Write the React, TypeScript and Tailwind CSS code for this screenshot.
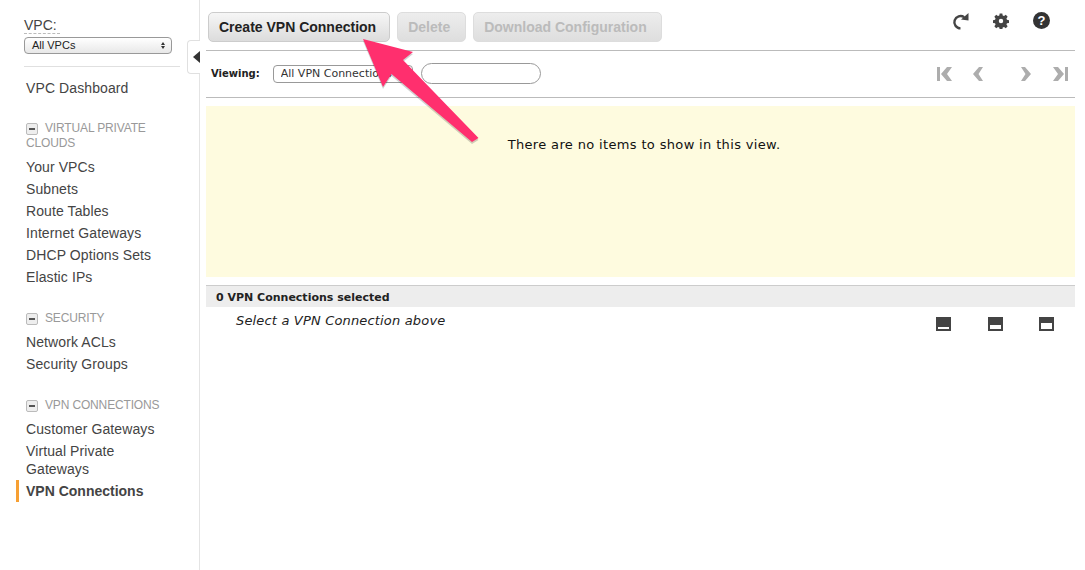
const sans = 'font-["Liberation_Sans",Arial,sans-serif]';
const verdana = 'font-["DejaVu_Sans",Verdana,sans-serif]';

function NavLink({ label, active }: { label: string; active?: boolean }) {
  return (
    <div
      className={
        active
          ? 'border-l-[3px] border-[#f7a033] -ml-[10px] pl-[7px] text-[14px] leading-[22px] font-bold text-[#444]'
          : 'text-[14px] leading-[22px] tracking-[0.1px] text-[#444]'
      }
    >
      {label}
    </div>
  );
}

function SectionHead({ label }: { label: string }) {
  return (
    <div className="mt-[22px] mb-[5px] pt-px text-[12px] leading-[15px] tracking-[-0.15px] text-[#999]">
      <span className="inline-flex items-center justify-center align-middle -my-[3px] w-[12px] h-[12px] mr-[7px] rounded-[2px] border border-[#bbb] bg-[#eee]">
        <span className="block w-[6px] h-[2px] bg-[#555]" />
      </span>
      {label}
    </div>
  );
}

function PagerIcon({ d, className }: { d: string; className?: string }) {
  return (
    <svg width="16" height="16" viewBox="0 0 16 16" className={className}>
      <path d={d} fill="#adadad" />
    </svg>
  );
}

function PaneIcon({ bar }: { bar: string }) {
  return (
    <div className="w-[15px] h-[14px] bg-[#444] flex items-end justify-center pb-[2px]">
      <div className={bar} />
    </div>
  );
}

export default function App() {
  return (
    <div className={`relative h-[570px] w-[1085px] flex bg-white overflow-hidden ${sans}`}>
      {/* Sidebar */}
      <div className="w-[200px] shrink-0 border-r border-[#e4e4e4] pt-[17px] pl-[26px] pr-[20px]">
        <div className="-ml-[2px]">
          <div className="text-[14px] leading-[17px] text-[#444] w-[36px] border-b border-dashed border-[#bbb] h-[17px]">VPC:</div>
          <div className="mt-[3px] w-[148px] h-[17px] rounded-[4px] border border-[#999] bg-gradient-to-b from-white to-[#e8e8e8] flex items-center justify-between pl-[7px] pr-[6px] text-[11px] text-[#222]">
            All VPCs
            <span className="flex flex-col gap-[1px]">
              <span className="block w-0 h-0 border-x-[2.5px] border-x-transparent border-b-[3px] border-b-[#333]" />
              <span className="block w-0 h-0 border-x-[2.5px] border-x-transparent border-t-[3px] border-t-[#333]" />
            </span>
          </div>
          <div className="mt-[12px] h-px bg-[#e0e0e0] w-[156px]" />
        </div>
        <div className="mt-[10px] -mb-px"><NavLink label="VPC Dashboard" /></div>

        <SectionHead label="VIRTUAL PRIVATE CLOUDS" />
        <NavLink label="Your VPCs" />
        <NavLink label="Subnets" />
        <NavLink label="Route Tables" />
        <NavLink label="Internet Gateways" />
        <NavLink label="DHCP Options Sets" />
        <NavLink label="Elastic IPs" />

        <SectionHead label="SECURITY" />
        <NavLink label="Network ACLs" />
        <NavLink label="Security Groups" />

        <SectionHead label="VPN CONNECTIONS" />
        <NavLink label="Customer Gateways" />
        <div className="text-[14px] leading-[18px] tracking-[0.1px] text-[#444] py-[2px]">Virtual Private Gateways</div>
        <NavLink label="VPN Connections" active />
      </div>

      {/* Main */}
      <div className="flex-1 flex flex-col pl-[6px] pr-[10px]">
        <div className="h-[51px] shrink-0 border-b border-[#bbb] flex items-start pt-[12px] pl-[2px]">
          <button className="h-[30px] pl-[10px] pr-[13px] rounded-[5px] border border-[#ccc] bg-gradient-to-b from-[#f6f6f6] to-[#dcdcdc] text-[14px] font-bold text-[#222] whitespace-nowrap">
            Create VPN Connection
          </button>
          <button className="ml-[7px] h-[30px] pl-[10px] pr-[15px] rounded-[5px] border border-[#ddd] bg-gradient-to-b from-[#ededed] to-[#dedede] text-[14px] font-bold text-[#bbb]">
            Delete
          </button>
          <button className="ml-[7px] h-[30px] pl-[10px] pr-[14px] rounded-[5px] border border-[#ddd] bg-gradient-to-b from-[#ededed] to-[#dedede] text-[14px] font-bold text-[#bbb] whitespace-nowrap">
            Download Configuration
          </button>
          <div className="ml-auto h-[17px] flex items-center pr-[25px]">
            <svg width="18" height="18" viewBox="0 0 18 18">
              <path d="M13.2 5.2 A6.2 6.2 0 1 0 9.5 16.4" fill="none" stroke="#444" strokeWidth="2.4" />
              <path d="M17.5 1 L17.5 8.5 L10 7.5 Z" fill="#444" />
            </svg>
            <svg width="16" height="16" viewBox="0 0 18 18" className="ml-[24px]">
              <path
                fill="#444"
                fillRule="evenodd"
                d="M7.5 0.5h3l.4 2.4 1.5.6 2-1.4 2.1 2.1-1.4 2 .6 1.5 2.4.4v3l-2.4.4-.6 1.5 1.4 2-2.1 2.1-2-1.4-1.5.6-.4 2.4h-3l-.4-2.4-1.5-.6-2 1.4-2.1-2.1 1.4-2-.6-1.5-2.4-.4v-3l2.4-.4.6-1.5-1.4-2 2.1-2.1 2 1.4 1.5-.6zM9 6.5a2.5 2.5 0 1 0 0 5 2.5 2.5 0 0 0 0-5z"
              />
            </svg>
            <div className="ml-[24px] w-[17px] h-[17px] rounded-full bg-[#333] text-white text-[13px] font-bold leading-[17px] text-center">?</div>
          </div>
        </div>

        <div className="h-[47px] shrink-0 border-b border-[#bbb] flex items-center pl-[5px] pb-[1px]">
          <span className={`text-[10px] font-bold text-[#222] ${verdana}`}>Viewing:</span>
          <div className={`ml-[13px] w-[140px] h-[18px] rounded-[4px] border border-[#999] bg-white text-[11px] leading-[16px] pl-[7px] pr-[20px] text-[#333] whitespace-nowrap ${verdana}`}>
            <div className="overflow-hidden">All VPN Connections</div>
          </div>
          <div className="ml-[8px] w-[120px] h-[21px] rounded-full border border-[#999] bg-white" />
          <div className="ml-auto flex items-center pr-[7px]">
            <PagerIcon d="M0 1h3v14H0zM4 8l6-7h5L10 8l5 7h-5z" />
            <PagerIcon className="ml-[17px]" d="M3 8l6-7h4L8.5 8l4.5 7H9z" />
            <PagerIcon className="ml-[32px]" d="M13 8L7 1H3l4.5 7L3 15h4z" />
            <PagerIcon className="ml-[18px]" d="M16 1h-3v14h3zM12 8L6 1H1l5 7-5 7h5z" />
          </div>
        </div>

        <div className="mt-[8px] h-[171px] shrink-0 bg-[#fefbdf] pt-[31px] pl-[7px] text-center">
          <div className={`text-[13px] leading-[16px] text-[#111] tracking-[0.35px] ${verdana}`}>There are no items to show in this view.</div>
        </div>

        <div className={`mt-[8px] h-[22px] shrink-0 border-t border-[#ccc] bg-[#ededed] pl-[10px] pt-px text-[11px] leading-[21px] font-bold text-[#222] ${verdana}`}>
          0 VPN Connections selected
        </div>

        <div className="flex items-start justify-between pl-[30px] pr-[21px] pt-[6px]">
          <span className={`text-[13px] leading-[16px] italic tracking-[0.17px] text-[#222] ${verdana}`}>Select a VPN Connection above</span>
          <div className="flex pt-[4px]">
            <PaneIcon bar="w-[11px] h-[2px] bg-white" />
            <div className="ml-[37px]"><PaneIcon bar="w-[11px] h-[4px] bg-white" /></div>
            <div className="ml-[36px]"><PaneIcon bar="w-[11px] h-[6px] bg-white" /></div>
          </div>
        </div>
      </div>

      {/* Collapse tab on the sidebar edge */}
      <div className="absolute left-[187px] top-[40px] w-[13px] h-[34px] rounded-l-[4px] border border-r-0 border-[#e0e0e0] bg-white flex items-center justify-end">
        <div className="w-0 h-0 border-y-[6px] border-y-transparent border-r-[7px] border-r-[#333]" />
      </div>

      {/* Annotation arrow */}
      <svg className="absolute left-0 top-0 pointer-events-none" width="1085" height="570" viewBox="0 0 1085 570">
        <path d="M363 39 L413 52 L403 60 L478.5 138 L472 142 L391.5 74 L383 87 Z" fill="#000" opacity="0.18" transform="translate(0 2)" />
        <path d="M363 39 L413 52 L403 60 L478.5 138 L472 142 L391.5 74 L383 87 Z" fill="#ff2f6e" />
      </svg>
    </div>
  );
}
